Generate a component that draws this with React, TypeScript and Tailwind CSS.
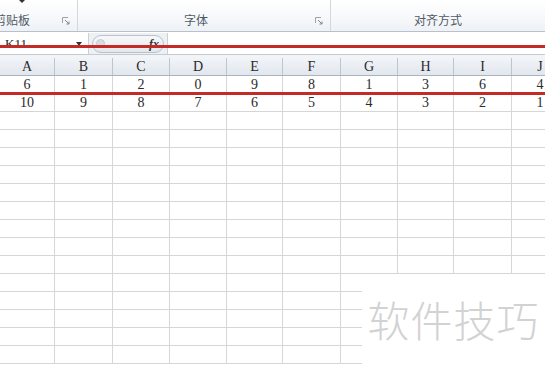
import React from "react";

const cols = ["A", "B", "C", "D", "E", "F", "G", "H", "I", "J"];
const widths = [55, 58, 57, 57, 56, 58, 57, 56, 58, 57];
const row1 = ["6", "1", "2", "0", "9", "8", "1", "3", "6", "4"];
const row2 = ["10", "9", "8", "7", "6", "5", "4", "3", "2", "1"];

function Launcher() {
  return (
    <svg width="8" height="8" viewBox="0 0 8 8" className="block">
      <path d="M0.5 6V0.5H6" stroke="#9aa3ae" strokeWidth="1" fill="none" />
      <path d="M3 3L7 7M7 4.5V7H4.5" stroke="#7d8793" strokeWidth="1" fill="none" />
    </svg>
  );
}

function Row({ vals, header }: { vals?: string[]; header?: boolean }) {
  return (
    <div
      className={
        header
          ? "flex h-[18px] bg-gradient-to-b from-[#f1f4f8] to-[#e2e7ee] border-b border-[#a9b4c2]"
          : "flex h-[18px] border-b border-[#d6d6d6]"
      }
    >
      {widths.map((w, i) => (
        <div
          key={i}
          style={{ width: w }}
          className={
            (header ? "border-r border-[#bcc5d1]" : "border-r border-[#d6d6d6]") +
            " shrink-0 flex items-center justify-center text-[14px] leading-none text-[#2a2a2a]"
          }
        >
          {header ? cols[i] : vals ? vals[i] : ""}
        </div>
      ))}
    </div>
  );
}

export default function App() {
  const empty = Array.from({ length: 14 });
  return (
    <div
      className="relative w-[545px] h-[365px] overflow-hidden bg-white"
      style={{ fontFamily: '"Liberation Serif", "DejaVu Serif", serif' }}
    >
      {/* Ribbon */}
      <div
        className="relative flex h-[32px] bg-gradient-to-b from-white via-[#f8f9fb] to-[#eef1f5] border-b border-[#b7c0cc]"
        style={{ fontFamily: '"Noto Sans CJK SC", "Noto Sans", sans-serif' }}
      >
        <div className="relative w-[77px] shrink-0 flex items-end pb-[5px]">
          <span className="ml-[-6px] text-[12px] leading-none text-[#505a66]">剪贴板</span>
          <div className="ml-auto mr-[7px] mb-[1px]">
            <Launcher />
          </div>
          <div className="absolute left-[19px] top-0 w-0 h-0 border-l-[3px] border-r-[3px] border-t-[3px] border-l-transparent border-r-transparent border-t-[#333]" />
        </div>
        <div className="w-px shrink-0 bg-[#d3d8df]" />
        <div className="relative w-[252px] shrink-0 flex items-end pb-[5px]">
          <span className="absolute left-[106px] bottom-[5px] text-[12px] leading-none text-[#505a66]">字体</span>
          <div className="ml-auto mr-[7px] mb-[1px]">
            <Launcher />
          </div>
        </div>
        <div className="w-px shrink-0 bg-[#d3d8df]" />
        <div className="relative flex-1 flex items-end pb-[5px]">
          <span className="ml-[83px] text-[12px] leading-none text-[#505a66]">对齐方式</span>
        </div>
      </div>

      {/* Formula bar */}
      <div className="flex h-[22px] bg-[#eef1f4] border-b border-[#c4cbd4] mt-[1px]">
        <div className="w-[89px] shrink-0 flex items-center bg-white border-r border-[#c9d0d8]">
          <span className="ml-[5px] text-[13px] leading-none text-[#222]">K11</span>
          <div className="ml-auto mr-[6px] w-0 h-0 border-l-[3px] border-r-[3px] border-t-[4px] border-l-transparent border-r-transparent border-t-[#333]" />
        </div>
        <div className="w-[78px] shrink-0 flex items-center">
          <div className="ml-[3px] h-[18px] w-[72px] rounded-full border border-[#b9c1cc] bg-gradient-to-b from-[#f7f8fa] to-[#e4e8ed] flex items-center">
            <div className="ml-[3px] w-[9px] h-[9px] rounded-full bg-[#d8dde3] border border-[#c5ccd4]" />
            <span className="ml-auto mr-[4px] text-[12px] font-bold italic leading-none text-[#333]">
              fx
            </span>
          </div>
        </div>
        <div className="flex-1 bg-white border-l border-[#c9d0d8]" />
      </div>

      <div className="h-[3px] bg-[#f3f4f6]" />

      {/* Grid */}
      <div>
        <Row header />
        <Row vals={row1} />
        <Row vals={row2} />
        {empty.map((_, i) => (
          <Row key={i} />
        ))}
      </div>

      {/* red annotation lines */}
      <div className="absolute left-0 right-0 top-[45px] h-[3px] bg-[#c42a26]" />
      <div className="absolute left-0 right-0 top-[92px] h-[3px] bg-[#c42a26]" />

      {/* watermark */}
      <div className="absolute left-[362px] top-[274px] right-0 bottom-0 bg-white flex items-center justify-center">
        <span
          className="text-[42px] leading-none text-[#d2d2d2] tracking-[1px] mt-[-2px]"
          style={{ fontFamily: '"Noto Sans CJK SC", sans-serif', fontWeight: 300 }}
        >
          软件技巧
        </span>
      </div>
    </div>
  );
}
